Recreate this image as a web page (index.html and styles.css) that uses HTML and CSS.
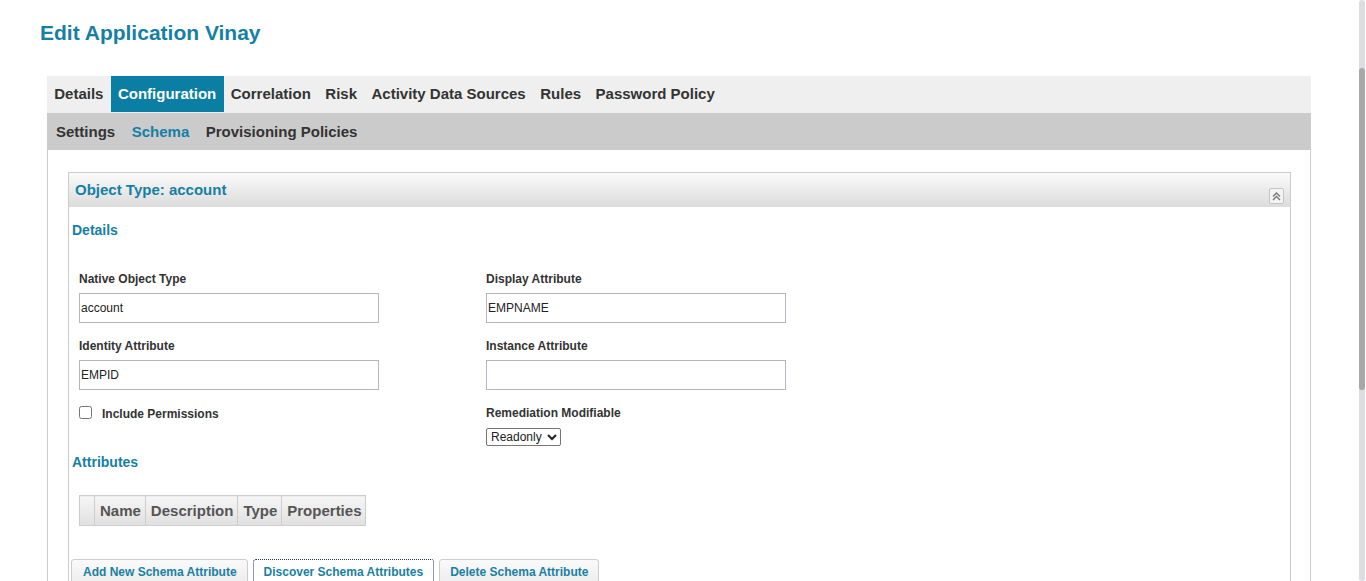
FILE: index.html
```html
<!DOCTYPE html>
<html>
<head>
<meta charset="utf-8">
<link rel="stylesheet" href="styles.css">
</head>
<body>
<h1 class="page-title">Edit Application Vinay</h1>
<div class="app">
  <nav class="tabs">
    <span class="tab">Details</span>
    <span class="tab active">Configuration</span>
    <span class="tab">Correlation</span>
    <span class="tab">Risk</span>
    <span class="tab">Activity Data Sources</span>
    <span class="tab">Rules</span>
    <span class="tab">Password Policy</span>
  </nav>
  <nav class="subtabs">
    <span class="subtab">Settings</span>
    <span class="subtab current">Schema</span>
    <span class="subtab">Provisioning Policies</span>
  </nav>
  <div class="content">
    <section class="panel">
      <header class="panel-head">
        <span class="panel-title">Object Type: account</span>
        <span class="collapse">
          <svg width="9" height="9" viewBox="0 0 9 9"><path d="M1 4.5 L4.5 1 L8 4.5 M1 8 L4.5 4.5 L8 8" fill="none" stroke="#777" stroke-width="1.4"/></svg>
        </span>
      </header>
      <div class="panel-body">
        <h3 class="section">Details</h3>
        <div class="form">
          <div class="field">
            <label class="lbl">Native Object Type</label>
            <input class="txt" type="text" value="account">
          </div>
          <div class="field">
            <label class="lbl">Display Attribute</label>
            <input class="txt" type="text" value="EMPNAME">
          </div>
          <div class="field">
            <label class="lbl">Identity Attribute</label>
            <input class="txt" type="text" value="EMPID">
          </div>
          <div class="field">
            <label class="lbl">Instance Attribute</label>
            <input class="txt" type="text" value="">
          </div>
          <div class="field">
            <label class="check"><input class="cb" type="checkbox"><span>Include Permissions</span></label>
          </div>
          <div class="field">
            <label class="lbl lbl-sel">Remediation Modifiable</label>
            <select class="sel"><option>Readonly</option></select>
          </div>
        </div>
        <h3 class="section attrs">Attributes</h3>
        <table class="grid">
          <thead>
            <tr><th class="c0"></th><th>Name</th><th>Description</th><th>Type</th><th>Properties</th></tr>
          </thead>
        </table>
        <div class="buttons">
          <button class="btn first">Add New Schema Attribute</button>
          <button class="btn focus">Discover Schema Attributes</button>
          <button class="btn">Delete Schema Attribute</button>
        </div>
      </div>
    </section>
  </div>
</div>
<div class="scrollbar"><div class="thumb"></div></div>
</body>
</html>
```

FILE: styles.css
```css
html, body {
  margin: 0;
  padding: 0;
  background: #fff;
  font-family: "Liberation Sans", Arial, sans-serif;
  color: #333;
  overflow: hidden;
}

.page-title {
  margin: 0;
  padding: 21px 0 0 40px;
  height: 55px;
  box-sizing: border-box;
  font-size: 21px;
  line-height: 24px;
  font-weight: bold;
  color: #1580a3;
}

.app {
  margin: 21px 0 0 47px;
  width: 1264px;
}

.tabs {
  display: flex;
  height: 37px;
  background: #efefef;
  align-items: stretch;
}

.tab {
  display: flex;
  align-items: center;
  padding: 0 7.25px 2px 7.25px;
  font-size: 15px;
  font-weight: bold;
  color: #333;
}

.tab.active {
  background: #0b7ea3;
  color: #fff;
  height: 34px;
}

.subtabs {
  display: flex;
  height: 37px;
  background: #cbcbcb;
  align-items: center;
  padding-left: 9px;
  gap: 16.5px;
}

.subtab {
  font-size: 15px;
  font-weight: bold;
  color: #333;
}

.subtab.current {
  color: #1580a3;
}

.content {
  border-left: 1px solid #ccc;
  border-right: 1px solid #ccc;
  padding: 22px 19px 0 20px;
  height: 500px;
}

.panel {
  border: 1px solid #ccc;
  border-bottom: none;
  height: 480px;
}

.panel-head {
  display: flex;
  justify-content: space-between;
  align-items: flex-end;
  height: 34px;
  box-sizing: border-box;
  padding: 0 6px 3px 6px;
  background: linear-gradient(#fafafa, #dcdcdc);
}

.panel-title {
  font-size: 15px;
  font-weight: bold;
  color: #1580a3;
  align-self: center;
  margin-top: 2px;
}

.collapse {
  display: flex;
  align-items: center;
  justify-content: center;
  width: 13px;
  height: 14px;
  border: 1px solid #c4c4c4;
  border-radius: 2px;
  background: #f4f4f4;
}

.panel-body {
  padding: 0 0 0 3px;
}

.section {
  margin: 0;
  font-size: 14px;
  line-height: 16px;
  font-weight: bold;
  color: #1580a3;
}

.panel-body > .section:first-child {
  padding-top: 15px;
}

.form {
  display: grid;
  grid-template-columns: 407px 407px;
  padding: 34px 0 0 7px;
  row-gap: 16px;
}

.field {
  display: flex;
  flex-direction: column;
  align-items: flex-start;
}

.lbl {
  font-size: 12px;
  line-height: 15px;
  font-weight: bold;
  color: #333;
  margin-bottom: 6px;
}

.lbl-sel {
  margin-bottom: 7px;
}

.txt {
  width: 300px;
  height: 30px;
  box-sizing: border-box;
  border: 1px solid #b4b4c4;
  padding: 0 1px;
  margin: 0;
  font-family: "Liberation Sans", Arial, sans-serif;
  font-size: 12px;
  color: #222;
  outline: none;
}

.check {
  display: flex;
  align-items: center;
  font-size: 12px;
  font-weight: bold;
  line-height: 15px;
  color: #333;
}

.cb {
  width: 13px;
  height: 13px;
  margin: 0 10px 0 0;
  position: relative;
  top: -1px;
}

.check span {
  position: relative;
  top: 1px;
}

.sel {
  height: 18px;
  width: 75px;
  font-family: "Liberation Sans", Arial, sans-serif;
  font-size: 12px;
  padding: 0;
  margin: 0;
  border: 1px solid #767676;
  border-radius: 2px;
  color: #222;
  background: #fff;
}

.section.attrs {
  margin-top: 8px;
}

.grid {
  margin: 25px 0 0 7px;
  border-collapse: collapse;
  height: 31px;
}

.grid th {
  border: 1px solid #ccc;
  background: linear-gradient(#f6f6f6, #e0e0e0);
  font-size: 15px;
  font-weight: bold;
  color: #555;
  padding: 0 4px 0 5px;
  height: 29px;
  white-space: nowrap;
}

.grid th.c0 {
  width: 5px;
}

.buttons {
  display: flex;
  gap: 5px;
  margin: 33px 0 0 -1px;
}

.btn {
  font-family: "Liberation Sans", Arial, sans-serif;
  font-size: 12px;
  font-weight: bold;
  color: #1a7fa5;
  height: 26px;
  padding: 0 10px;
  border: 1px solid #ccc;
  border-radius: 3px 3px 0 0;
  background: linear-gradient(#fafafa, #ececec);
  margin: 0;
}

.btn.first {
  padding-left: 11px;
}

.btn.focus {
  background: #fff;
  border: 1px dotted #223366;
}

.scrollbar {
  position: fixed;
  top: 0;
  right: 1px;
  width: 6px;
  height: 581px;
  background: #dcdce2;
  border-radius: 3px;
}

.thumb {
  position: absolute;
  top: 68px;
  left: 0;
  width: 6px;
  height: 322px;
  background: #a8a8a8;
  border-radius: 3px;
}
```
